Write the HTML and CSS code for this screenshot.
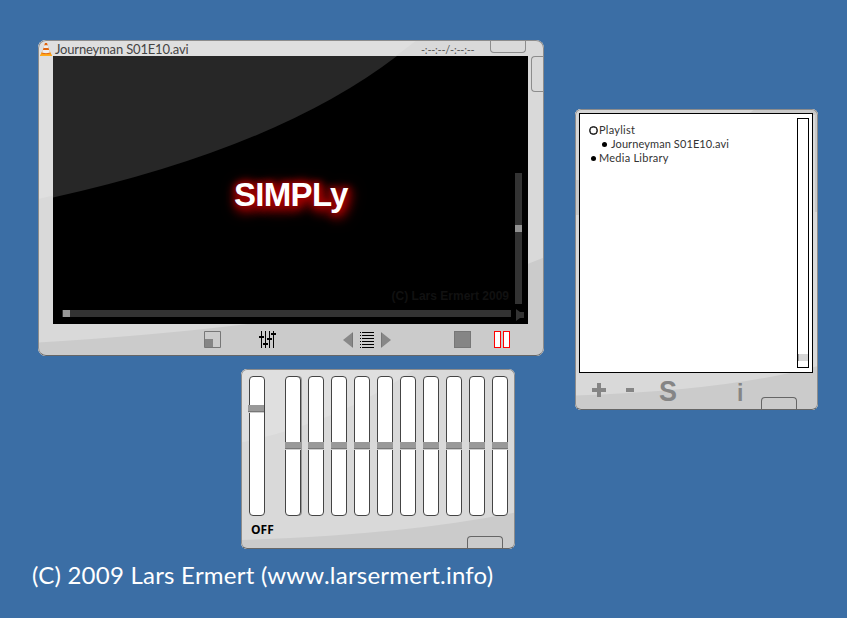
FILE: index.html
```html
<!DOCTYPE html>
<html lang="en">
<head>
<meta charset="utf-8">
<title>Simply media player</title>
<link rel="stylesheet" href="styles.css">
</head>
<body>
<main class="desktop">
  <section class="window player">
    <svg class="sheen" viewBox="0 0 506 316" aria-hidden="true">
      <path fill="#dfdfdf" d="M0 0H379Q248 104 0 159Z"/>
      <path fill="#cbcbcb" d="M0 302.5Q354 281 506 217.5V316H0Z"/>
    </svg>
    <header class="titlebar">
      <svg class="cone" viewBox="0 0 12 13">
        <path fill="#f58a0b" d="M2 8.5H10L12 13H0Z"/>
        <path fill="#e0640e" d="M5 0H7L10 10Q6 12.5 2 10Z"/>
        <path fill="#eee" d="M4.3 2.2H7.7L8.6 5H3.4ZM2.8 7H9.2L10 9.6Q6 11 2 9.6Z"/>
        <path fill="#ffab1c" d="M1 11.2H11L12 13H0Z"/>
      </svg>
      <span class="title">Journeyman S01E10.avi</span>
      <span class="time">-:--:--/-:--:--</span>
      <span class="tab tab-top"></span>
    </header>
    <div class="middle">
      <div class="screen">
        <svg class="glare" viewBox="0 0 475 268" aria-hidden="true">
          <path fill="#272727" d="M0 0H344Q224 92 0 141.5Z"/>
        </svg>
        <h1 class="logo">SIMPLy</h1>
        <div class="credit">(C) Lars Ermert 2009</div>
        <div class="volume"><i></i></div>
        <div class="seek"><i></i></div>
        <svg class="speaker" viewBox="0 0 8 12"><path fill="#333" d="M0 0L4 3H8V9H4L0 12Z"/></svg>
      </div>
      <span class="tab tab-side"></span>
    </div>
    <footer class="controls">
      <svg class="resize" viewBox="0 0 17 17"><path fill="none" stroke="#777" d="M.5 .5H16.5V16.5H.5Z"/><path fill="#858585" d="M1 8H9V16H1Z"/></svg>
      <svg class="mixer" viewBox="0 0 17 17"><path d="M2 0H3V17H2ZM6 0H7V17H6ZM10 0H11V17H10ZM14 0H15V17H14ZM0 5H5V7H0ZM4 12H9V14H4ZM8 7H13V9H8ZM12 2H17V4H12Z"/></svg>
      <svg class="prev" viewBox="0 0 10 16"><path fill="#888" d="M10 0V16L0 8Z"/><path stroke="#777" d="M9.5 1V15"/></svg>
      <svg class="list" viewBox="0 0 14 16"><path stroke="#000" d="M2 .5H14M2 3.5H14M2 6.5H14M2 9.5H14M2 12.5H14M2 15.5H14M0 .5H1M0 3.5H1M0 6.5H1M0 9.5H1M0 12.5H1M0 15.5H1"/></svg>
      <svg class="next" viewBox="0 0 10 16"><path fill="#888" d="M0 0L10 8L0 16Z"/><path stroke="#777" d="M.5 1V15"/></svg>
      <span class="stop"></span>
      <span class="pause"></span><span class="pause"></span>
    </footer>
  </section>

  <section class="window equalizer">
    <svg class="sheen" viewBox="0 0 274 180" aria-hidden="true">
      <path fill="#dfdfdf" d="M0 0H174Q98 53.5 0 73.5Z"/>
      <path fill="#cbcbcb" d="M0 171Q163 166 274 143.5V180H0Z"/>
    </svg>
    <div class="bands">
      <div class="band preamp"><i></i></div>
      <div class="band first"><i></i></div>
      <div class="band"><i></i></div>
      <div class="band"><i></i></div>
      <div class="band"><i></i></div>
      <div class="band"><i></i></div>
      <div class="band"><i></i></div>
      <div class="band"><i></i></div>
      <div class="band"><i></i></div>
      <div class="band"><i></i></div>
      <div class="band"><i></i></div>
    </div>
    <footer class="eq-foot"><b>OFF</b><span class="tab tab-bottom"></span></footer>
  </section>

  <section class="window playlist">
    <svg class="sheen" viewBox="0 0 243 301" aria-hidden="true">
      <path fill="#c9c9c9" d="M0 0H243V103H240V6H4V106H0Z"/>
      <path fill="#d6d6d6" d="M0 0H180L172 6H4V71H0Z"/>
      <path fill="#cbcbcb" d="M0 286.5Q152 282 243 257V301H0Z"/>
    </svg>
    <div class="panel">
      <ul class="tree">
        <li><i class="ring"></i><span class="t1">Playlist</span></li>
        <li class="child"><i class="dot"></i><span class="t2">Journeyman S01E10.avi</span></li>
        <li><i class="dot root"></i><span class="t3">Media Library</span></li>
      </ul>
      <div class="scroll"><i></i></div>
    </div>
    <footer class="pl-foot">
      <svg class="plus" viewBox="0 0 14 14"><path fill="#858585" d="M5 0H9V5H14V9H9V14H5V9H0V5H5Z"/></svg>
      <span class="minus"></span>
      <b class="sort">S</b>
      <b class="info">i</b>
      <span class="tab tab-bottom"></span>
    </footer>
  </section>

  <p class="copyright">(C) 2009 Lars Ermert (www.larsermert.info)</p>
</main>
</body>
</html>
```
FILE: styles.css
```css
* { box-sizing: border-box; }
body { margin: 0; }
svg { display: block; flex: none; }
.desktop {
  position: relative;
  width: 847px;
  height: 618px;
  overflow: hidden;
  background: #3b6ea5;
  font-family: Lato, sans-serif;
}
.window {
  position: absolute;
  background: #d9d9d9;
  border-radius: 8px;
  overflow: hidden;
}
.window::after {
  content: "";
  position: absolute;
  inset: 0;
  border: 1px solid #8c8c8c;
  border-bottom-color: #666;
  border-radius: inherit;
  pointer-events: none;
}
.sheen { position: absolute; inset: 0; width: 100%; height: 100%; }
.tab { display: block; border: 1px solid #8c8c8c; flex: none; }
.tab-top { width: 36px; height: 13px; border-top: 0; border-radius: 0 0 4px 4px; }
.tab-side { width: 13px; height: 36px; border-right: 0; border-radius: 4px 0 0 4px; }
.tab-bottom { width: 36px; height: 13px; border-color: #666; border-bottom: 0; border-radius: 4px 4px 0 0; }

/* Player */
.player { left: 38px; top: 40px; width: 506px; height: 316px; }
.titlebar { position: relative; display: flex; height: 16px; padding-left: 2px; }
.cone { width: 12px; height: 13px; margin-top: 3px; }
.title { width: 368px; margin-left: 3px; font-size: 13px; line-height: 18px; letter-spacing: -.17px; color: #444; white-space: nowrap; }
.time { width: 67px; margin-left: -2px; font-size: 11px; line-height: 19px; letter-spacing: -.23px; color: #555; white-space: nowrap; }
.tab-top { margin-left: 2px; }
.middle { position: relative; display: flex; padding-left: 15px; }
.tab-side { margin-left: 3px; }
.screen {
  position: relative;
  display: grid;
  grid-template-columns: 9px 446px 7px 7px 6px;
  grid-template-rows: 117px 131px 6px 14px;
  width: 475px;
  height: 268px;
  background: #000;
}
.glare { position: absolute; inset: 0; width: 475px; height: 268px; }
.logo {
  position: relative;
  grid-area: 1 / 2 / 3 / 3;
  margin: 119px 0 0 172px;
  font: bold 33px/40px "Liberation Sans", sans-serif;
  letter-spacing: -.7px;
  color: #fff;
  text-shadow: 0 0 6px #a00000, 1px 1px 9px #a00000, 1px 2px 12px #a00000, 1px 3px 14px #a00000, 2px 3px 16px #900000;
}
.credit { grid-area: 1 / 2 / 3 / 4; place-self: end; margin: 0 6px 1px 0; font: bold 12px/14px "Liberation Sans", sans-serif; color: #111; white-space: nowrap; }
.volume { grid-area: 2 / 4; padding-top: 52px; background: #333; }
.volume i { display: block; height: 7px; background: #929292; }
.seek { grid-area: 4 / 2 / 5 / 4; width: 449px; height: 7px; padding-left: 1px; background: #333; }
.seek i { display: block; width: 7px; height: 7px; background: #999; }
.speaker { grid-area: 4 / 4; width: 8px; height: 12px; margin: -1px 0 0 1px; }
.controls { position: relative; display: flex; align-items: flex-start; height: 32px; padding: 7px 0 0 166px; }
.resize { width: 17px; height: 17px; }
.mixer { width: 17px; height: 17px; margin-left: 38px; }
.prev { width: 10px; height: 16px; margin: 1px 0 0 67px; }
.list { width: 14px; height: 16px; margin: 1px 0 0 7px; }
.next { width: 10px; height: 16px; margin: 1px 0 0 7px; }
.stop { width: 17px; height: 17px; margin: 0 23px 0 63px; background: #858585; border: 1px solid #777; }
.pause { width: 7px; height: 17px; margin-right: 2px; background: #fff; border: 1px solid #f00; }

/* Equalizer */
.equalizer { left: 241px; top: 369px; width: 274px; height: 180px; border-radius: 6px; }
.bands { position: relative; display: flex; gap: 7px; padding: 7px 0 0 8px; }
.band { width: 16px; height: 140px; padding-top: 65px; background: #fff; border: 1px solid #444; border-radius: 4px; }
.band i { display: block; width: 16px; height: 8px; margin-left: -1px; background: linear-gradient(#999 6px, #777 6px 7px, #d0d0d0 7px); }
.preamp { margin-right: 13px; padding-top: 28px; }
.preamp i { margin-left: -2px; }
.first { box-shadow: 1px 0 #999; }
.eq-foot { position: relative; display: flex; height: 33px; padding-left: 10px; }
.eq-foot b { width: 216px; font: bold 12px/28px "Open Sans", sans-serif; color: #000; }
.eq-foot .tab { margin-top: 20px; }

/* Playlist */
.playlist { left: 575px; top: 109px; width: 243px; height: 301px; padding: 4px 0 0 4px; border-radius: 6px; }
.panel { position: relative; display: flex; width: 234px; height: 260px; background: #fff; border: 1px solid #000; }
.tree { width: 217px; margin: 0; padding: 9px 0 0 9px; list-style: none; font-size: 11px; line-height: 14px; color: #333; }
.tree li { display: flex; align-items: center; height: 14px; white-space: nowrap; }
.tree .child { padding-left: 11px; }
.t1, .t3 { letter-spacing: .25px; }
.t2 { letter-spacing: .1px; }
.ring { width: 9px; height: 9px; margin-right: 1px; border: 1.5px solid #000; border-radius: 50%; box-shadow: inset 0 0 0 .5px #000; }
.dot { width: 5px; height: 5px; margin: 0 4px 0 2px; background: #000; border-radius: 50%; }
.root { margin-right: 3px; }
.scroll { width: 12px; height: 250px; margin-top: 4px; padding-top: 235px; border: 1px solid #000; }
.scroll i { display: block; height: 7px; background: #d6d6d6; border-left: 1px solid #999; }
.pl-foot { position: relative; display: flex; height: 37px; padding-left: 13px; color: #858585; }
.plus { width: 14px; height: 14px; margin-top: 10px; }
.minus { width: 8px; height: 4px; margin: 15px 0 0 20px; background: #858585; }
.sort { width: 78px; margin-left: 25px; font: bold 29px/37px "Liberation Sans", sans-serif; transform: scaleX(.93); transform-origin: 1px 0; }
.info { width: 24px; font: bold 23px/40px "Liberation Sans", sans-serif; }
.pl-foot .tab { margin-top: 24px; }

.copyright { position: absolute; left: 32px; top: 560px; margin: 0; font-size: 24px; line-height: 30px; letter-spacing: .24px; color: #fff; white-space: nowrap; }
```
